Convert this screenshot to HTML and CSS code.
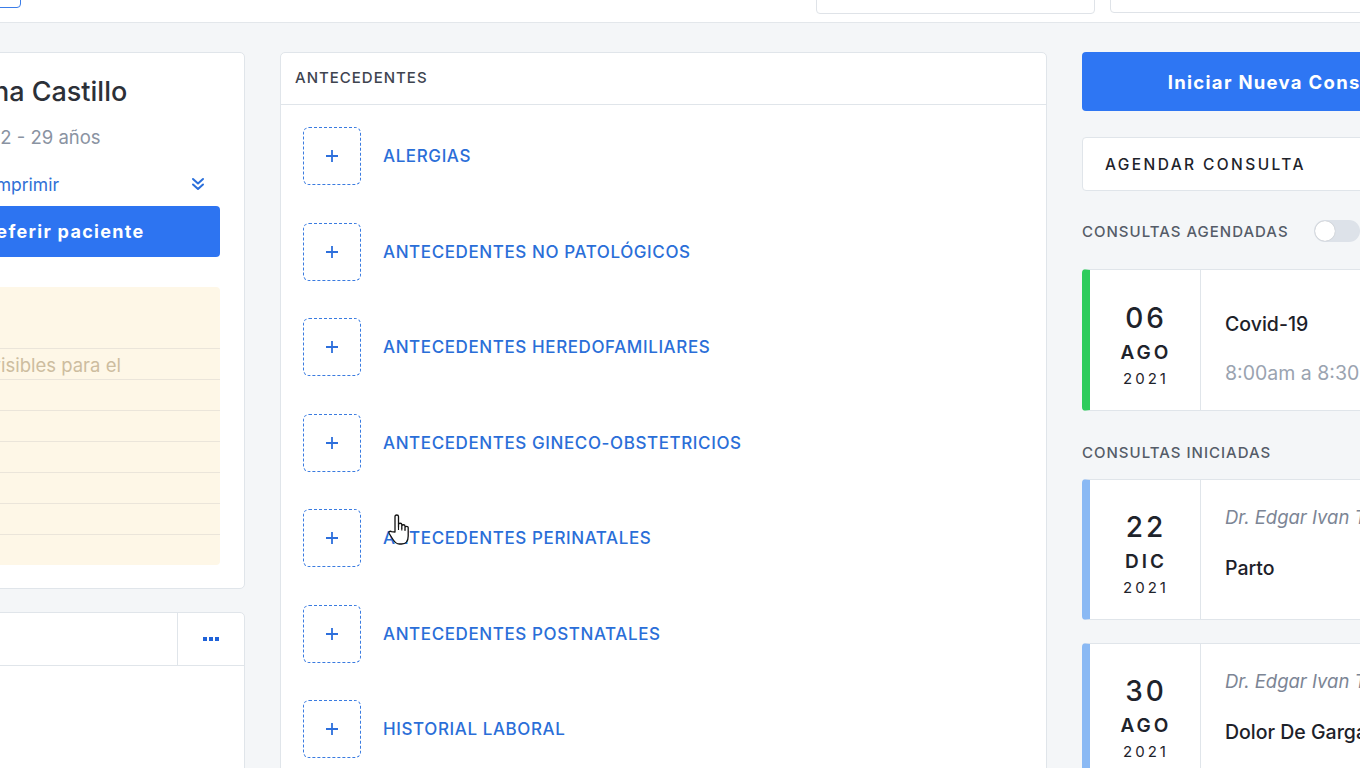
FILE: index.html
```html
<!DOCTYPE html>
<html lang="es">
<head>
    <meta charset="UTF-8">
    <meta name="viewport" content="width=device-width, initial-scale=1.0">
    <title>Expediente del paciente</title>
    <link rel="stylesheet" href="styles.css">
</head>
<body>
    <div class="topbar">
        <div class="top-btn"></div>
        <div class="top-space"></div>
        <div class="top-input"></div>
        <div class="top-input wide"></div>
    </div>

    <div class="main">
        <!-- columna del paciente -->
        <div class="col-left">
            <div class="card patient">
                <h1 class="p-name">Mariana Castillo</h1>
                <div class="p-age">03/1992 - 29 años</div>
                <div class="p-print">
                    <span class="print-txt">Imprimir</span>
                    <svg class="chev" width="16" height="16" viewBox="0 0 16 16">
                        <path d="M3 3 L8 7.5 L13 3 M3 8.5 L8 13 L13 8.5" fill="none" stroke="#2a6fdb" stroke-width="2" stroke-linecap="round" stroke-linejoin="round"/>
                    </svg>
                </div>
                <button class="btn-refer">Referir paciente</button>
                <div class="notes">
                    <div class="note-lines">Notas visibles para el</div>
                </div>
            </div>

            <div class="card files">
                <div class="files-head">
                    <div class="files-title"></div>
                    <div class="files-more"><i></i><i></i><i></i></div>
                </div>
                <div class="files-body"></div>
            </div>
        </div>

        <!-- antecedentes -->
        <div class="card col-mid">
            <div class="mid-head">ANTECEDENTES</div>
            <ul class="ante-list">
                <li class="ante"><span class="add-box"><svg width="14" height="14" viewBox="0 0 14 14"><path d="M7 1v12M1 7h12" stroke="#2d6fdc" stroke-width="1.8"/></svg></span>ALERGIAS</li>
                <li class="ante"><span class="add-box"><svg width="14" height="14" viewBox="0 0 14 14"><path d="M7 1v12M1 7h12" stroke="#2d6fdc" stroke-width="1.8"/></svg></span>ANTECEDENTES NO PATOLÓGICOS</li>
                <li class="ante"><span class="add-box"><svg width="14" height="14" viewBox="0 0 14 14"><path d="M7 1v12M1 7h12" stroke="#2d6fdc" stroke-width="1.8"/></svg></span>ANTECEDENTES HEREDOFAMILIARES</li>
                <li class="ante"><span class="add-box"><svg width="14" height="14" viewBox="0 0 14 14"><path d="M7 1v12M1 7h12" stroke="#2d6fdc" stroke-width="1.8"/></svg></span>ANTECEDENTES GINECO-OBSTETRICIOS</li>
                <li class="ante"><span class="add-box"><svg width="14" height="14" viewBox="0 0 14 14"><path d="M7 1v12M1 7h12" stroke="#2d6fdc" stroke-width="1.8"/></svg></span>ANTECEDENTES PERINATALES</li>
                <li class="ante"><span class="add-box"><svg width="14" height="14" viewBox="0 0 14 14"><path d="M7 1v12M1 7h12" stroke="#2d6fdc" stroke-width="1.8"/></svg></span>ANTECEDENTES POSTNATALES</li>
                <li class="ante"><span class="add-box"><svg width="14" height="14" viewBox="0 0 14 14"><path d="M7 1v12M1 7h12" stroke="#2d6fdc" stroke-width="1.8"/></svg></span>HISTORIAL LABORAL</li>
            </ul>
        </div>

        <!-- consultas -->
        <div class="col-right">
            <button class="btn-new">Iniciar Nueva Consulta</button>
            <div class="btn-agenda">AGENDAR CONSULTA</div>

            <div class="sec-title">CONSULTAS AGENDADAS <span class="toggle"><span class="knob"></span></span></div>
            <div class="cita green">
                <div class="cita-date">
                    <div class="d-day">06</div>
                    <div class="d-mon">AGO</div>
                    <div class="d-year">2021</div>
                </div>
                <div class="cita-info">
                    <div class="c-title">Covid-19</div>
                    <div class="c-time">8:00am a 8:30pm</div>
                </div>
            </div>

            <div class="sec-title started">CONSULTAS INICIADAS</div>
            <div class="cita blue">
                <div class="cita-date">
                    <div class="d-day">22</div>
                    <div class="d-mon">DIC</div>
                    <div class="d-year">2021</div>
                </div>
                <div class="cita-info">
                    <div class="c-doc">Dr. Edgar Ivan Torres</div>
                    <div class="c-title">Parto</div>
                </div>
            </div>
            <div class="cita blue">
                <div class="cita-date">
                    <div class="d-day">30</div>
                    <div class="d-mon">AGO</div>
                    <div class="d-year">2021</div>
                </div>
                <div class="cita-info">
                    <div class="c-doc">Dr. Edgar Ivan Torres</div>
                    <div class="c-title">Dolor De Garganta</div>
                </div>
            </div>
        </div>
    </div>

    <svg class="cursor" width="28" height="36" viewBox="0 0 28 36">
        <path d="M9 20 V4.5 C9 2.5 12.5 2.5 12.5 4.5 V15 V12.5 C12.5 10.8 15.8 10.8 15.8 12.5 V16 V14 C15.8 12.3 19 12.3 19 14 V17 V15.6 C19 14 22.2 14 22.2 15.6 V24 C22.2 29 20 32 15.5 32 H13.5 C10 32 8.8 30.5 7 27.5 L3.2 21.5 C2.3 20 4 18.6 5.4 19.6 Z" fill="#fff" stroke="#111" stroke-width="1.3" stroke-linejoin="round"/>
        <path d="M12.5 15 V18 M15.8 16 V18.5 M19 17 V19" stroke="#111" stroke-width="1.1"/>
    </svg>
</body>
</html>
```

FILE: styles.css
```css
body {
    margin: 0;
    background-color: #f4f6f8;
    font-family: "Inter", "Liberation Sans", sans-serif;
    color: #1e232b;
    overflow: hidden;
    width: 1360px;
    height: 768px;
}

.topbar {
    height: 22px;
    background-color: #fff;
    border-bottom: 1px solid #e3e7eb;
    display: flex;
    align-items: flex-end;
    overflow: hidden;
}
.top-btn {
    width: 60px;
    height: 30px;
    margin-left: -41px;
    margin-bottom: 14px;
    border: 1px solid #3b7de8;
    border-radius: 4px;
}
.top-space {
    flex-grow: 1;
}
.top-input {
    width: 277px;
    height: 30px;
    margin-bottom: 8px;
    border: 1px solid #dfe3e8;
    border-radius: 4px;
}
.top-input.wide {
    width: 300px;
    margin-left: 15px;
    margin-right: -52px;
    margin-bottom: 9px;
}

.main {
    display: flex;
    align-items: flex-start;
    gap: 35px;
    padding-top: 29px;
}

.card {
    background-color: #fff;
    border: 1px solid #e0e5ea;
    border-radius: 5px;
    box-sizing: border-box;
}

/* paciente */
.col-left {
    width: 330px;
    margin-left: -85px;
    flex-shrink: 0;
}
.patient {
    padding: 23px 24px 23px;
}
.p-name {
    margin: 0 0 0 -20px;
    font-size: 27px;
    font-weight: 500;
    color: #2c3038;
    line-height: 32px;
}
.p-age {
    margin-top: 17px;
    font-size: 18.5px;
    color: #8a93a2;
    line-height: 24px;
}
.p-print {
    display: flex;
    align-items: center;
    justify-content: space-between;
    margin-top: 23px;
    padding-left: 51px;
    padding-right: 14px;
    height: 24px;
}
.print-txt {
    font-size: 17.5px;
    color: #2f6fd6;
}
.btn-refer {
    display: block;
    width: 100%;
    height: 51px;
    margin-top: 10px;
    padding-right: 38px;
    border: none;
    border-radius: 4px;
    background-color: #2d74f1;
    color: #fff;
    font-family: inherit;
    font-size: 18px;
    font-weight: 700;
    letter-spacing: 1.3px;
}
.notes {
    margin-top: 30px;
    background-color: #fef7e7;
    border-radius: 4px;
    padding-top: 61px;
}
.note-lines {
    height: 217px;
    background-image: linear-gradient(to bottom, #ebe5da 1px, transparent 1px);
    background-size: 100% 31px;
    line-height: 34px;
    font-size: 18.5px;
    color: #cdbd9f;
    text-indent: -6px;
}

.files {
    margin-top: 23px;
    height: 200px;
}
.files-head {
    display: flex;
    height: 52px;
    border-bottom: 1px solid #e0e5ea;
}
.files-title {
    flex-grow: 1;
    border-right: 1px solid #e0e5ea;
}
.files-more {
    width: 66px;
    display: flex;
    align-items: center;
    justify-content: center;
    gap: 2px;
}
.files-more i {
    width: 4px;
    height: 4px;
    background-color: #1f62d8;
}

/* antecedentes */
.col-mid {
    width: 767px;
    flex-shrink: 0;
    height: 760px;
}
.mid-head {
    height: 52px;
    box-sizing: border-box;
    padding: 0 0 3px 14px;
    border-bottom: 1px solid #e0e5ea;
    display: flex;
    align-items: center;
    font-size: 15px;
    font-weight: 500;
    color: #3e444f;
    letter-spacing: 1px;
}
.ante-list {
    list-style-type: none;
    margin: 0;
    padding: 22px 22px 0;
    display: flex;
    flex-direction: column;
    gap: 37.5px;
}
.ante {
    display: flex;
    align-items: center;
    gap: 22px;
    font-size: 17px;
    font-weight: 500;
    color: #2a6ed8;
    letter-spacing: 0.6px;
}
.add-box {
    width: 58px;
    height: 58px;
    box-sizing: border-box;
    border: 1.5px dashed #3a7be0;
    border-radius: 6px;
    display: flex;
    align-items: center;
    justify-content: center;
}

/* consultas */
.col-right {
    width: 404px;
    flex-shrink: 0;
}
.btn-new {
    display: block;
    width: 100%;
    height: 59px;
    border: none;
    border-radius: 4px;
    background-color: #2e76f3;
    color: #fff;
    font-family: inherit;
    font-size: 18.5px;
    font-weight: 700;
    letter-spacing: 1.3px;
}
.btn-agenda {
    margin-top: 26px;
    height: 54px;
    box-sizing: border-box;
    background-color: #fff;
    border: 1px solid #e0e5ea;
    border-radius: 4px;
    display: flex;
    align-items: center;
    padding-left: 22px;
    font-size: 15.5px;
    font-weight: 500;
    letter-spacing: 2.4px;
    color: #1e232b;
}
.sec-title {
    display: flex;
    align-items: center;
    gap: 25px;
    margin-top: 29px;
    margin-bottom: 27px;
    height: 22px;
    font-size: 15px;
    font-weight: 500;
    color: #555c68;
    letter-spacing: 1px;
}
.sec-title.started {
    margin-bottom: 16px;
}
.toggle {
    width: 46px;
    height: 22px;
    border-radius: 11px;
    background-color: #dde2e9;
    display: flex;
    align-items: center;
    padding-left: 1px;
    box-sizing: border-box;
}
.knob {
    width: 20px;
    height: 20px;
    border-radius: 50%;
    background-color: #fff;
    box-shadow: 0 0 1px rgba(0, 0, 0, 0.3);
}

.cita {
    display: flex;
    height: 142px;
    background-color: #fff;
    border: 1px solid #e0e5ea;
    border-left: 8px solid #2ecc5c;
    border-radius: 4px;
    box-sizing: border-box;
    margin-bottom: 23px;
}
.cita.blue {
    height: 141px;
    border-left-color: #8ab9f4;
}
.cita + .sec-title {
    margin-top: 30px;
}
.cita-date {
    width: 111px;
    border-right: 1px solid #e0e5ea;
    display: flex;
    flex-direction: column;
    align-items: center;
    justify-content: center;
    padding: 7px 0 0 2px;
    box-sizing: border-box;
    flex-shrink: 0;
}
.d-day {
    font-size: 28px;
    font-weight: 500;
    letter-spacing: 3px;
    line-height: 38px;
}
.d-mon {
    font-size: 19px;
    font-weight: 600;
    letter-spacing: 3px;
    line-height: 32px;
}
.d-year {
    font-size: 15px;
    letter-spacing: 3px;
    line-height: 20px;
}
.cita-info {
    padding: 42px 0 0 24px;
    display: flex;
    flex-direction: column;
    gap: 25px;
    white-space: nowrap;
}
.cita.blue .cita-info {
    padding-top: 25px;
    gap: 27px;
}
.c-title {
    font-size: 19.5px;
    font-weight: 500;
    color: #1d2129;
    line-height: 24px;
}
.c-time {
    font-size: 19.5px;
    color: #9aa3b0;
    line-height: 24px;
}
.c-doc {
    font-size: 18.5px;
    font-style: italic;
    color: #7c8595;
    line-height: 24px;
}

.cursor {
    position: absolute;
    left: 386px;
    top: 512px;
}
```
